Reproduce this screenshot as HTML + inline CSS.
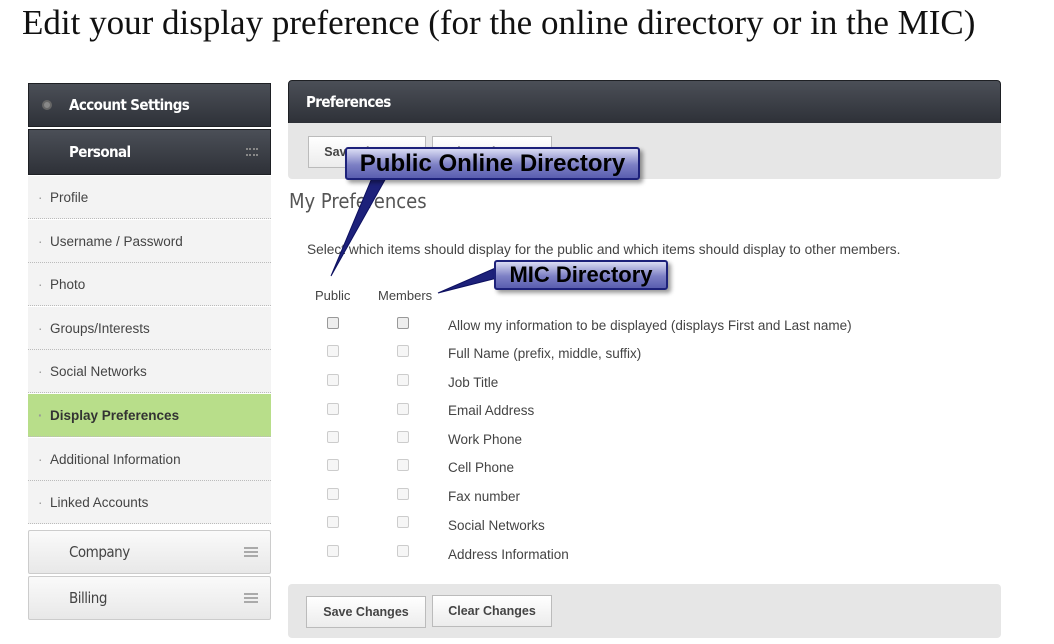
<!DOCTYPE html>
<html><head><meta charset="utf-8"><style>
*{box-sizing:border-box;margin:0;padding:0}
body{width:1054px;height:644px;background:#fff;position:relative;overflow:hidden;font-family:"Liberation Sans",Arial,sans-serif;color:#444}
.a{position:absolute}
h1{position:absolute;left:22px;top:3px;font:400 35px "Liberation Serif",serif;color:#111;white-space:nowrap}
.dark{background:linear-gradient(#4b4f57,#2e3138);color:#fff;border:1px solid #1e2024;font-family:"DejaVu Sans Condensed","Liberation Sans",sans-serif;font-weight:bold;font-size:15px;letter-spacing:-0.6px}
.item{position:absolute;left:28px;width:243px;height:43px;background:#f3f3f3;border-bottom:1px dotted #bbb;font-size:13.5px;color:#444;padding-left:22px;line-height:43px}
.item:before{content:"·";position:absolute;left:10px;color:#999}
.light{position:absolute;left:28px;width:243px;height:44px;background:linear-gradient(#fafafa,#e8e8e8);border:1px solid #ccc;border-radius:2px;font-family:"DejaVu Sans Condensed","Liberation Sans",sans-serif;font-size:15px;letter-spacing:-0.5px;color:#444;padding-left:40px;line-height:42px}
.ham{position:absolute;right:12px;top:16px;width:14px;height:10px;border-top:2px solid #aaa;border-bottom:2px solid #aaa}
.ham:after{content:"";position:absolute;left:0;right:0;top:2px;height:2px;background:#aaa}
.btn{position:absolute;height:32px;background:linear-gradient(#fff,#ececec);border:1px solid #bbb;font-size:12.5px;font-weight:bold;color:#444;text-align:center;line-height:30px}
.cb{position:absolute;width:12px;height:12px;border:1px solid #ccc;border-radius:2px;background:#f6f6f6}
.cb.s{border-color:#999;background:#eee}
.lbl{position:absolute;left:448px;font-size:13.5px;color:#444}
.call{position:absolute;background:linear-gradient(#dadcf3,#7c7fc4 55%,#5a5eb0);border:2px solid #1d217a;border-radius:3px;color:#000;font-weight:bold;box-shadow:3px 3px 4px rgba(0,0,0,.4);text-align:center}
</style></head><body>
<h1>Edit your display preference (for the online directory or in the MIC)</h1>

<div class="a dark" style="left:28px;top:83px;width:243px;height:44px;line-height:42px;padding-left:40px">Account Settings
<span style="position:absolute;left:13px;top:16px;width:10px;height:10px;border-radius:50%;background:#888;border:2px solid #666"></span></div>
<div class="a dark" style="left:28px;top:129px;width:243px;height:46px;line-height:44px;padding-left:40px">Personal
<span style="position:absolute;right:12px;top:18px;width:12px;height:8px;border-top:2px dotted #888;border-bottom:2px dotted #888"></span></div>
<div class="item" style="top:176px">Profile</div>
<div class="item" style="top:220px">Username / Password</div>
<div class="item" style="top:263px">Photo</div>
<div class="item" style="top:307px">Groups/Interests</div>
<div class="item" style="top:350px">Social Networks</div>
<div class="item" style="top:394px;background:#b8de8a;font-weight:bold;color:#333">Display Preferences</div>
<div class="item" style="top:438px">Additional Information</div>
<div class="item" style="top:481px">Linked Accounts</div>
<div class="light" style="top:530px">Company<span class="ham"></span></div>
<div class="light" style="top:576px">Billing<span class="ham"></span></div>

<div class="a dark" style="left:288px;top:80px;width:713px;height:44px;line-height:42px;padding-left:17px;border-radius:4px 4px 0 0">Preferences</div>
<div class="a" style="left:288px;top:123px;width:713px;height:56px;background:#e6e6e6;border-radius:0 0 4px 4px"></div>
<div class="btn" style="left:308px;top:136px;width:118px">Save Changes</div>
<div class="btn" style="left:432px;top:136px;width:120px">Clear Changes</div>

<div class="a" style="left:289px;top:189px;font-family:'DejaVu Sans Condensed','Liberation Sans Narrow',sans-serif;font-size:20px;color:#555">My Preferences</div>
<div class="a" style="left:307px;top:242px;font-size:13.7px;color:#444;white-space:nowrap">Select which items should display for the public and which items should display to other members.</div>
<div class="a" style="left:315px;top:288px;font-size:13px">Public</div>
<div class="a" style="left:378px;top:288px;font-size:13px">Members</div>

<div class="cb s" style="left:327px;top:317px"></div><div class="cb s" style="left:397px;top:317px"></div><div class="lbl" style="top:318px">Allow my information to be displayed (displays First and Last name)</div>
<div class="cb" style="left:327px;top:345px"></div><div class="cb" style="left:397px;top:345px"></div><div class="lbl" style="top:346px">Full Name (prefix, middle, suffix)</div>
<div class="cb" style="left:327px;top:374px"></div><div class="cb" style="left:397px;top:374px"></div><div class="lbl" style="top:375px">Job Title</div>
<div class="cb" style="left:327px;top:403px"></div><div class="cb" style="left:397px;top:403px"></div><div class="lbl" style="top:403px">Email Address</div>
<div class="cb" style="left:327px;top:431px"></div><div class="cb" style="left:397px;top:431px"></div><div class="lbl" style="top:432px">Work Phone</div>
<div class="cb" style="left:327px;top:459px"></div><div class="cb" style="left:397px;top:459px"></div><div class="lbl" style="top:460px">Cell Phone</div>
<div class="cb" style="left:327px;top:488px"></div><div class="cb" style="left:397px;top:488px"></div><div class="lbl" style="top:489px">Fax number</div>
<div class="cb" style="left:327px;top:516px"></div><div class="cb" style="left:397px;top:516px"></div><div class="lbl" style="top:518px">Social Networks</div>
<div class="cb" style="left:327px;top:545px"></div><div class="cb" style="left:397px;top:545px"></div><div class="lbl" style="top:547px">Address Information</div>

<div class="a" style="left:288px;top:584px;width:713px;height:54px;background:#e6e6e6;border-radius:4px"></div>
<div class="btn" style="left:306px;top:596px;width:120px">Save Changes</div>
<div class="btn" style="left:432px;top:595px;width:120px">Clear Changes</div>

<svg class="a" style="left:0;top:0" width="1054" height="644">
<polygon points="372,178 386,178 331,276" fill="#1d217a" stroke="#0d1060" stroke-width="1"/>
<polygon points="500,266 505,276 438,293" fill="#1d217a" stroke="#0d1060" stroke-width="1"/>
</svg>
<div class="call" style="left:345px;top:147px;width:295px;height:33px;font-size:24px;line-height:29px">Public Online Directory</div>
<div class="call" style="left:494px;top:260px;width:174px;height:30px;font-size:22px;line-height:26px">MIC Directory</div>
</body></html>
